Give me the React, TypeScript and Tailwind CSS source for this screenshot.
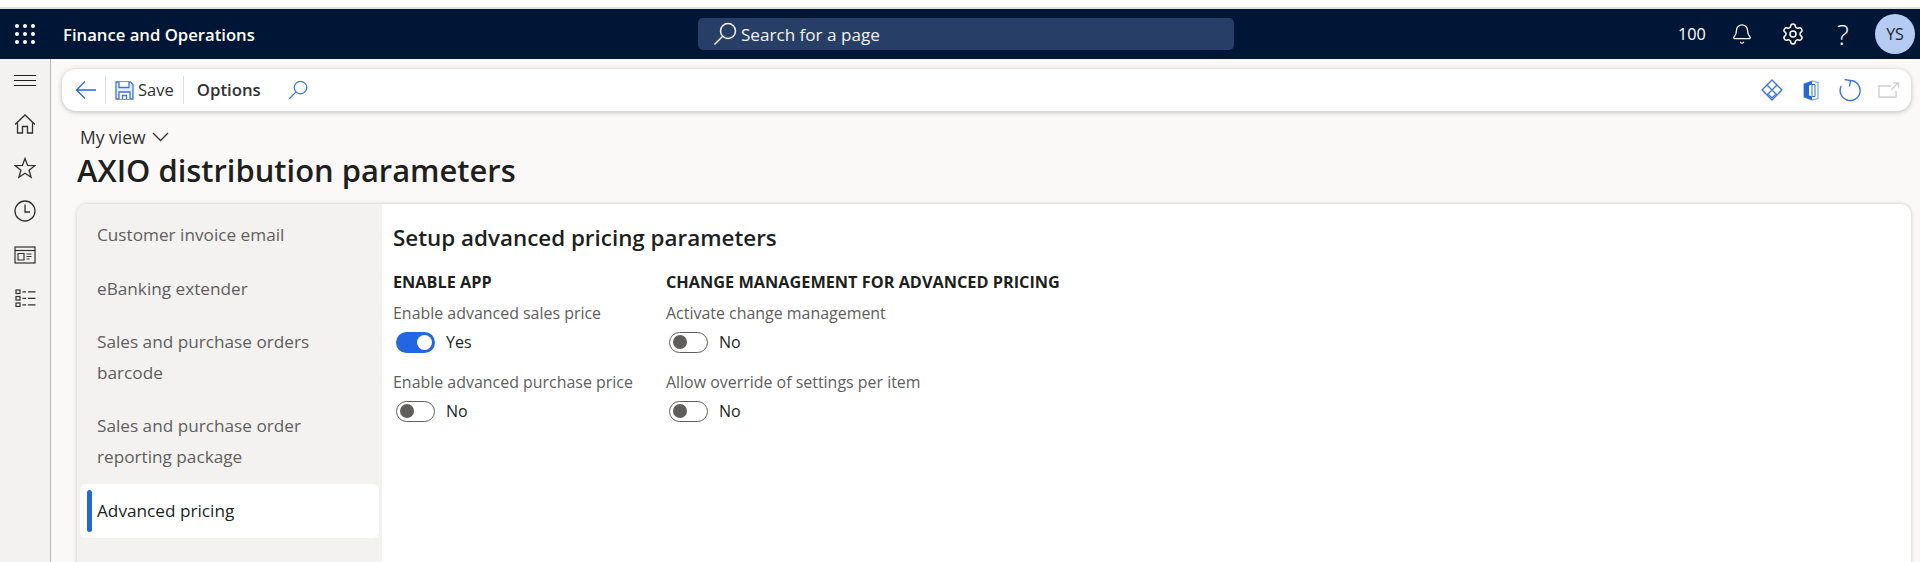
import React from 'react';
import { Bell, Settings } from 'lucide-react';

const navItems = [
  { lines: ['Customer invoice email'], h: 'h-[54px]' },
  { lines: ['eBanking extender'], h: 'h-[54px]' },
  { lines: ['Sales and purchase orders', 'barcode'], h: 'h-[84px]' },
  { lines: ['Sales and purchase order', 'reporting package'], h: 'h-[84px]' },
];

const Toggle = ({ on, label }: { on: boolean; label: string }) => (
  <div className="flex items-center h-[24px] mt-[7px]">
    <div className="w-[39px] ml-[3px] flex items-center">
      {on ? (
        <div className="w-[39px] h-[21px] rounded-full bg-[#2266e3] flex items-center justify-end pr-[3px]">
          <div className="w-[15px] h-[15px] rounded-full bg-white" />
        </div>
      ) : (
        <div className="w-[39px] h-[21px] rounded-full border border-[#605e5c] bg-white flex items-center pl-[3px]">
          <div className="w-[14px] h-[14px] rounded-full bg-[#605e5c]" />
        </div>
      )}
    </div>
    <span className="ml-[11px] text-[16px] text-[#201f1e]">{label}</span>
  </div>
);

const Field = ({ label, on, value }: { label: string; on: boolean; value: string }) => (
  <div className="mb-[18px]">
    <div className="text-[15.95px] leading-[20px] text-[#605e5c]">{label}</div>
    <Toggle on={on} label={value} />
  </div>
);

const WaffleIcon = () => (
  <svg width="22" height="22" viewBox="0 0 22 22" fill="white">
    {[3, 11, 19].map((y) =>
      [3, 11, 19].map((x) => <circle key={`${x}-${y}`} cx={x} cy={y} r="2" />)
    )}
  </svg>
);

const SearchGlass = ({ size, color }: { size: number; color: string }) => (
  <svg width={size} height={size} viewBox="0 0 24 24" fill="none" stroke={color} strokeWidth="1.5">
    <circle cx="15" cy="9" r="7.500" />
    <path d="M9.700 14.300L1.500 22.500" />
  </svg>
);

const BackArrow = () => (
  <svg width="22" height="20" viewBox="0 0 22 20" fill="none" stroke="#2266e3" strokeWidth="1.3">
    <path d="M21 10H1.500M10 1.500L1.500 10l8.500 8.500" />
  </svg>
);

const SaveIcon = () => (
  <svg width="19" height="19" viewBox="0 0 19 19" fill="none" stroke="#3a76e6" strokeWidth="1.300">
    <path d="M1 1h14.500L18 3.500V18H1z" fill="#e6eefc" />
    <path d="M4 1v5.500h10V1" fill="white" />
    <path d="M4 18v-7h11v7" fill="white" />
    <path d="M7.500 18v-3.500h4V18" />
  </svg>
);

const HomeIcon = () => (
  <svg width="22" height="20" viewBox="0 0 22 20" fill="none" stroke="#323130" strokeWidth="1.300">
    <path d="M1 10.500L11 1l10 9.500" />
    <path d="M3.500 8.500V19h5v-6.500h5V19h5V8.500" />
  </svg>
);

const StarIcon = () => (
  <svg width="22" height="22" viewBox="0 0 22 22" fill="none" stroke="#323130" strokeWidth="1.300">
    <path d="M11 1.500l2.600 6.900 7.200.3-5.700 4.500 2 7-6.100-4-6.100 4 2-7-5.700-4.500 7.200-.3z" />
  </svg>
);

const ClockIcon = () => (
  <svg width="22" height="22" viewBox="0 0 22 22" fill="none" stroke="#323130" strokeWidth="1.300">
    <circle cx="11" cy="11" r="10" />
    <path d="M11 4.500V12h5" />
  </svg>
);

const WorkspaceIcon = () => (
  <svg width="22" height="18" viewBox="0 0 22 18" fill="none" stroke="#323130" strokeWidth="1.200">
    <rect x="1" y="1" width="20" height="16" />
    <path d="M1 4.500h20" />
    <path d="M4 7.500h6v6.500H4zM12.500 8h5M12.500 10.500h5M12.500 13h3" />
  </svg>
);

const ListIcon = () => (
  <svg width="21" height="18" viewBox="0 0 21 18" fill="none" stroke="#323130" strokeWidth="1.200">
    <rect x="1" y="1" width="4" height="3.500" />
    <rect x="1" y="7.500" width="4" height="3.500" />
    <rect x="1" y="14" width="4" height="3.500" />
    <path d="M7.500 2.800h3.500M13 2.800h7.500M7.500 9.300h3.500M13 9.300h7.500M7.500 15.800h3.500M13 15.800h7.500" />
  </svg>
);

const DiamondIcon = () => (
  <svg width="22" height="22" viewBox="0 0 22 22" fill="none" stroke="#3a76e6" strokeWidth="1.400" strokeLinejoin="round">
    <path d="M11 1l10 10-10 10L1 11z" />
    <path d="M6 6l5 5 5-5M6 16l5-5 5 5M11 11l-4 4 4 4 4-4z" />
  </svg>
);

const OfficeIcon = () => (
  <svg width="16" height="21" viewBox="0 0 16 21">
    <path d="M9 1L1 4v13l8 3 6-1.500V2.500z" fill="none" stroke="#7ea4ec" strokeWidth="1.200" />
    <path d="M1 4l8-3v3.500L6 5.500v10l3 1V20l-8-3z" fill="#2266e3" />
    <path d="M9 4.500h3v12H9z" fill="white" stroke="#2f6bdc" strokeWidth="1" />
  </svg>
);

const RefreshIcon = () => (
  <svg width="24" height="24" viewBox="0 0 24 24" fill="none" stroke="#3a76e6" strokeWidth="1.400">
    <path d="M12.500 2.500A10 10 0 1 1 3.200 8" />
    <path d="M6.500 1.500L12.500 2.500 11.500 8.500" />
  </svg>
);

const OpenIcon = () => (
  <svg width="22" height="16" viewBox="0 0 22 16" fill="none" stroke="#d2d0ce" strokeWidth="1.400">
    <path d="M13 4H1v11h17V9" />
    <path d="M13 8l7-7M15.500 1H20.500v4.500" />
  </svg>
);

const rail = 'h-[43.5px] flex items-center justify-center';

export default function App() {
  return (
    <div className="h-[562px] w-[1920px] overflow-hidden bg-[#faf9f8] font-['Open_Sans','Noto_Sans',sans-serif]">
      <div className="h-[7px] bg-white" />
      <div className="h-[2px] bg-[#e1dfdd]" />

      <header className="h-[50px] bg-[#001636] flex items-center text-white">
        <div className="w-[50px] flex justify-center"><WaffleIcon /></div>
        <div className="ml-[13px] w-[635px] pt-[1px] text-[16.7px] font-semibold">Finance and Operations</div>
        <div className="w-[536px] h-[32px] rounded-[5px] bg-[#273f66] flex items-center pl-[15px]">
          <SearchGlass size={24} color="#f3f2f1" />
          <span className="ml-[4px] pt-[1px] text-[17.1px] text-[#f3f2f1]">Search for a page</span>
        </div>
        <div className="ml-auto flex items-center pr-[5px]">
          <span className="w-[50px] text-center text-[16.2px]">100</span>
          <span className="w-[50px] flex justify-center"><Bell size={22} strokeWidth={1.4} /></span>
          <span className="w-[51px] flex justify-center"><Settings size={24} strokeWidth={1.5} /></span>
          <span className="w-[50px] text-center text-[28px] font-light leading-none">?</span>
          <div className="ml-[7px] w-[40px] h-[40px] rounded-full bg-[#b4cbf4] text-[#201f1e] flex items-center justify-center text-[16px]">YS</div>
        </div>
      </header>

      <div className="flex h-[503px]">
        <aside className="w-[51px] shrink-0 border-r border-[#b9b7b5] bg-[#f3f2f1] flex flex-col">
          <div className={rail}>
            <div className="w-[22px] flex flex-col gap-[4px]">
              <div className="h-px bg-[#201f1e]" />
              <div className="h-px bg-[#201f1e]" />
              <div className="h-px bg-[#201f1e]" />
            </div>
          </div>
          <div className={rail}><HomeIcon /></div>
          <div className={rail}><StarIcon /></div>
          <div className={rail}><ClockIcon /></div>
          <div className={rail}><WorkspaceIcon /></div>
          <div className={rail}><ListIcon /></div>
        </aside>

        <main className="flex-1 min-w-0 pl-[11px] pr-[9px] pt-[10px]">
          <div className="h-[42px] rounded-[14px] bg-white shadow-[0_1px_5px_rgba(0,0,0,0.25)] flex items-center pl-[13px] pr-[3px]">
            <BackArrow />
            <div className="w-px h-[28px] bg-[#e1dfdd] ml-[8px]" />
            <div className="ml-[9px]"><SaveIcon /></div>
            <span className="ml-[4px] text-[16.5px] text-[#323130]">Save</span>
            <div className="w-px h-[28px] bg-[#e1dfdd] ml-[9px]" />
            <span className="ml-[13px] text-[16.8px] font-semibold text-[#323130]">Options</span>
            <div className="ml-[27px]"><SearchGlass size={20} color="#3a76e6" /></div>
            <div className="ml-auto flex items-center">
              <div className="w-[39px] flex justify-center"><DiamondIcon /></div>
              <div className="w-[39px] flex justify-center"><OfficeIcon /></div>
              <div className="w-[39px] flex justify-center"><RefreshIcon /></div>
              <div className="w-[39px] flex justify-center"><OpenIcon /></div>
            </div>
          </div>

          <div className="ml-[18px] mt-[15px] flex items-center h-[22px] text-[17.5px] text-[#323130]">
            My view
            <svg width="17" height="10" viewBox="0 0 17 10" fill="none" stroke="#323130" strokeWidth="1.300" className="ml-[6px]">
              <path d="M1 1l7.500 7.500L16 1" />
            </svg>
          </div>
          <h1 className="ml-[15px] mt-[1px] text-[30.9px] leading-[42px] font-semibold text-[#201f1e]">AXIO distribution parameters</h1>

          <div className="ml-[15px] mt-[13px] h-[400px] rounded-t-[10px] bg-white shadow-[0_0_4px_rgba(0,0,0,0.2)] flex overflow-hidden">
            <nav className="w-[305px] shrink-0 bg-[#f3f2f1] pt-[3px] px-[3px]">
              {navItems.map((item) => (
                <div key={item.lines[0]} className={`${item.h} flex flex-col justify-center pl-[17px] text-[17.2px] leading-[31px] text-[#605e5c]`}>
                  {item.lines.map((l) => <div key={l}>{l}</div>)}
                </div>
              ))}
              <div className="h-[54px] mt-[1px] rounded-[6px] bg-white flex items-center pl-[7px] text-[17.2px] text-[#201f1e]">
                <div className="w-[5px] h-[42px] rounded-full bg-[#2266e3] mr-[5px]" />
                Advanced pricing
              </div>
            </nav>

            <section className="flex-1 pl-[11px] pt-[18px]">
              <h2 className="text-[22.4px] leading-[32px] font-semibold text-[#201f1e]">Setup advanced pricing parameters</h2>
              <div className="flex mt-[17px]">
                <div className="w-[273px]">
                  <h3 className="text-[16.3px] leading-[22px] font-bold text-[#201f1e] mb-[10px]">ENABLE APP</h3>
                  <Field label="Enable advanced sales price" on value="Yes" />
                  <Field label="Enable advanced purchase price" on={false} value="No" />
                </div>
                <div>
                  <h3 className="text-[16.3px] leading-[22px] font-bold text-[#201f1e] mb-[10px]">CHANGE MANAGEMENT FOR ADVANCED PRICING</h3>
                  <Field label="Activate change management" on={false} value="No" />
                  <Field label="Allow override of settings per item" on={false} value="No" />
                </div>
              </div>
            </section>
          </div>
        </main>
      </div>
    </div>
  );
}
